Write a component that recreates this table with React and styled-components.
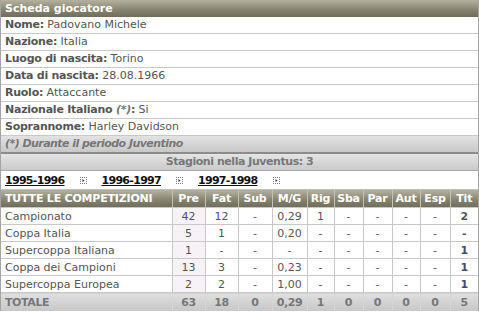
import React from "react";
import styled, { createGlobalStyle } from "styled-components";

const Global = createGlobalStyle`
  html, body { margin: 0; padding: 0; background: #ffffff; }
  body { font-family: Verdana, "DejaVu Sans", sans-serif; font-size: 11px; }
`;

const Panel = styled.div`
  width: 477px;
  border-left: 1px solid #a4a4a4;
  border-right: 1px solid #a4a4a4;
  background: #fff;
`;

const Header = styled.div`
  height: 17px;
  line-height: 17px;
  padding-left: 4px;
  color: #fff;
  font-weight: bold;
  background: linear-gradient(#b4b29e, #858370 60%, #706e5b);
`;

const InfoRow = styled.div`
  height: 16px;
  line-height: 16px;
  padding-left: 4px;
  color: #555;
  border-bottom: 1px solid #c8c8c8;
`;

const Label = styled.b`
  color: #555;
  letter-spacing: -0.25px;
`;

const Note = styled.i`
  color: #777;
`;

const Footnote = styled.div`
  height: 16px;
  line-height: 16px;
  padding-left: 4px;
  color: #777;
  font-weight: bold;
  font-style: italic;
  letter-spacing: -0.55px;
  background: linear-gradient(#e2e2e2, #c8c8c8);
  border-bottom: 2px solid #8c8c8c;
`;

const Seasons = styled.div`
  height: 16px;
  line-height: 16px;
  text-align: center;
  color: #777;
  font-weight: bold;
  letter-spacing: -0.45px;
  background: linear-gradient(#e4e4e4, #cacaca);
  border-bottom: 1px solid #a8a8a8;
`;

const SeasonBar = styled.div`
  display: flex;
  align-items: center;
  height: 19px;
  padding: 1px 0 0 4px;
  box-sizing: border-box;
  gap: 15px;
  border-bottom: 1px solid #bdbdbd;
`;

const SeasonLink = styled.a`
  color: #111;
  font-weight: bold;
  letter-spacing: -0.7px;
  text-decoration: underline;
  cursor: pointer;
`;

const Arrow = () => (
  <svg width="7" height="7" viewBox="0 0 7 7" style={{ display: "block" }}>
    <rect x="0" y="0" width="1" height="1" fill="#777" />
    <rect x="2" y="0" width="1" height="1" fill="#777" />
    <rect x="4" y="0" width="1" height="1" fill="#777" />
    <rect x="6" y="0" width="1" height="1" fill="#777" />
    <rect x="0" y="2" width="1" height="1" fill="#777" />
    <rect x="6" y="2" width="1" height="1" fill="#777" />
    <rect x="0" y="4" width="1" height="1" fill="#777" />
    <rect x="6" y="4" width="1" height="1" fill="#777" />
    <rect x="0" y="6" width="1" height="1" fill="#777" />
    <rect x="2" y="6" width="1" height="1" fill="#777" />
    <rect x="4" y="6" width="1" height="1" fill="#777" />
    <rect x="6" y="6" width="1" height="1" fill="#777" />
    <path d="M2.5 2 L4.5 3.5 L2.5 5 Z" fill="#333" />
  </svg>
);

const Table = styled.table`
  width: 477px;
  border-collapse: collapse;
  table-layout: fixed;
  font-size: 11px;
`;

const Th = styled.th`
  height: 17px;
  padding: 0 ${(p) => (p.$left ? "4px" : "0")};
  text-align: ${(p) => (p.$left ? "left" : "center")};
  color: #fff;
  font-weight: bold;
  letter-spacing: -0.2px;
  background: linear-gradient(#b4b29e, #858370 60%, #706e5b);
  border-left: ${(p) => (p.$left ? "none" : "1px solid #c4c2b4")};
  border-bottom: 1px solid #c8c8c8;
  white-space: nowrap;
`;

const Td = styled.td`
  height: 16px;
  padding: 0 ${(p) => (p.$left ? "4px" : "0")};
  text-align: ${(p) => (p.$left ? "left" : "center")};
  color: ${(p) => (p.$blue ? "#36507e" : "#555")};
  font-weight: ${(p) => (p.$bold ? "bold" : "normal")};
  background: ${(p) => (p.$tint ? "#f6f2f5" : "#fff")};
  border-left: ${(p) => (p.$left ? "none" : "1px solid #c8c8c8")};
  border-bottom: 1px solid #c8c8c8;
  white-space: nowrap;
`;

const TotTd = styled.td`
  height: 18px;
  padding: 0 ${(p) => (p.$left ? "4px" : "0")};
  text-align: ${(p) => (p.$left ? "left" : "center")};
  color: #777;
  font-weight: bold;
  letter-spacing: -0.4px;
  background: linear-gradient(#e0e0e0, #c6c6c6);
  border-left: ${(p) => (p.$left ? "none" : "1px solid #d6d6d6")};
  white-space: nowrap;
`;

const cols = [171, 33, 33, 34, 35, 27, 29, 29, 28, 30, 28];
const heads = ["Pre", "Fat", "Sub", "M/G", "Rig", "Sba", "Par", "Aut", "Esp", "Tit"];

const rows = [
  ["Campionato", "42", "12", "-", "0,29", "1", "-", "-", "-", "-", "2"],
  ["Coppa Italia", "5", "1", "-", "0,20", "-", "-", "-", "-", "-", "-"],
  ["Supercoppa Italiana", "1", "-", "-", "-", "-", "-", "-", "-", "-", "1"],
  ["Coppa dei Campioni", "13", "3", "-", "0,23", "-", "-", "-", "-", "-", "1"],
  ["Supercoppa Europea", "2", "2", "-", "1,00", "-", "-", "-", "-", "-", "1"],
];
const total = ["TOTALE", "63", "18", "0", "0,29", "1", "0", "0", "0", "0", "5"];

const info = [
  ["Nome:", "Padovano Michele"],
  ["Nazione:", "Italia"],
  ["Luogo di nascita:", "Torino"],
  ["Data di nascita:", "28.08.1966"],
  ["Ruolo:", "Attaccante"],
  ["NAZ", "Si"],
  ["Soprannome:", "Harley Davidson"],
];

export default function App() {
  return (
    <>
      <Global />
      <Panel>
        <Header>Scheda giocatore</Header>
        {info.map(([l, v]) => (
          <InfoRow key={l}>
            {l === "NAZ" ? (
              <Label>
                Nazionale Italiano <Note>(*)</Note>:
              </Label>
            ) : (
              <Label>{l}</Label>
            )}{" "}
            {v}
          </InfoRow>
        ))}
        <Footnote>(*) Durante il periodo Juventino</Footnote>
        <Seasons>Stagioni nella Juventus: 3</Seasons>
        <SeasonBar>
          {["1995-1996", "1996-1997", "1997-1998"].map((s) => (
            <React.Fragment key={s}>
              <SeasonLink>{s}</SeasonLink>
              <Arrow />
            </React.Fragment>
          ))}
        </SeasonBar>
        <Table>
          <colgroup>
            {cols.map((w, i) => (
              <col key={i} style={{ width: w }} />
            ))}
          </colgroup>
          <thead>
            <tr>
              <Th $left>TUTTE LE COMPETIZIONI</Th>
              {heads.map((h) => (
                <Th key={h}>{h}</Th>
              ))}
            </tr>
          </thead>
          <tbody>
            {rows.map((r) => (
              <tr key={r[0]}>
                {r.map((c, i) => (
                  <Td
                    key={i}
                    $left={i === 0}
                    $tint={i === 1}
                    $bold={i === 10}
                    $blue={i === 10 && c === "1"}
                  >
                    {c}
                  </Td>
                ))}
              </tr>
            ))}
            <tr>
              {total.map((c, i) => (
                <TotTd key={i} $left={i === 0}>
                  {c}
                </TotTd>
              ))}
            </tr>
          </tbody>
        </Table>
      </Panel>
    </>
  );
}
